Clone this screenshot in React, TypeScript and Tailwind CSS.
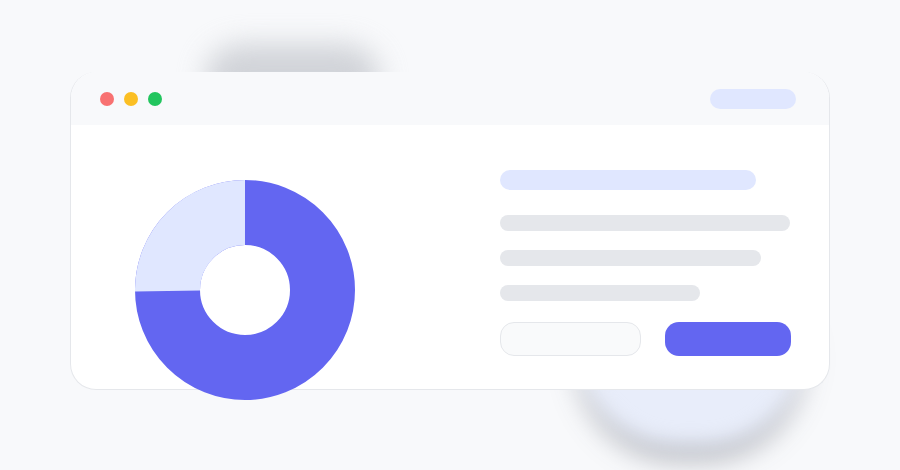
const Donut = () => (
  <svg width="220" height="220" viewBox="0 0 220 220" className="shrink-0">
    <circle cx="110" cy="110" r="77.5" fill="none" stroke="#6366f1" strokeWidth="65" />
    <path d="M 32.5 111 A 77.5 77.5 0 0 1 110 32.5" fill="none" stroke="#e0e7ff" strokeWidth="65" />
  </svg>
)

export default function App() {
  return (
    <div className="relative w-[900px] h-[470px] overflow-hidden bg-[#f8f9fb]">
      {/* blurred shapes behind the window */}
      <div className="absolute left-[205px] top-[44px] w-[175px] h-[70px] rounded-full bg-[#c4c7cd] blur-[14px] opacity-75" />
      <div className="absolute left-[578px] top-[245px] w-[225px] h-[200px] rounded-full bg-[#e8edfa] shadow-[0_14px_20px_rgba(60,64,80,0.4)] blur-[10px]" />

      <div className="relative flex flex-col ml-[70px] mt-[72px] w-[760px] rounded-[26px] border border-t-0 border-[#e5e7eb] bg-white">
        {/* title bar */}
        <div className="flex items-center justify-between h-[53px] pl-[29px] pr-[33px] rounded-t-[26px] bg-[#f8f9fb]">
          <div className="flex items-center gap-[10px]">
            <span className="w-[14px] h-[14px] rounded-full bg-[#f87171]" />
            <span className="w-[14px] h-[14px] rounded-full bg-[#fbbf24]" />
            <span className="w-[14px] h-[14px] rounded-full bg-[#22c55e]" />
          </div>
          <div className="w-[86px] h-[20px] rounded-full bg-[#e0e7ff]" />
        </div>

        {/* body */}
        <div className="flex h-[264px] pl-[64px] pt-[55px]">
          <Donut />
          <div className="flex flex-col ml-[145px] -mt-[10px]">
            <div className="w-[256px] h-[20px] rounded-full bg-[#e0e7ff]" />
            <div className="w-[290px] h-[16px] mt-[25px] rounded-full bg-[#e5e7eb]" />
            <div className="w-[261px] h-[16px] mt-[19px] rounded-full bg-[#e5e7eb]" />
            <div className="w-[200px] h-[16px] mt-[19px] rounded-full bg-[#e5e7eb]" />
            <div className="flex gap-[24px] mt-[21px]">
              <div className="w-[141px] h-[34px] rounded-[14px] border border-[#e5e7eb] bg-[#f9fafb]" />
              <div className="w-[126px] h-[34px] rounded-[14px] bg-[#6366f1]" />
            </div>
          </div>
        </div>
      </div>
    </div>
  )
}
